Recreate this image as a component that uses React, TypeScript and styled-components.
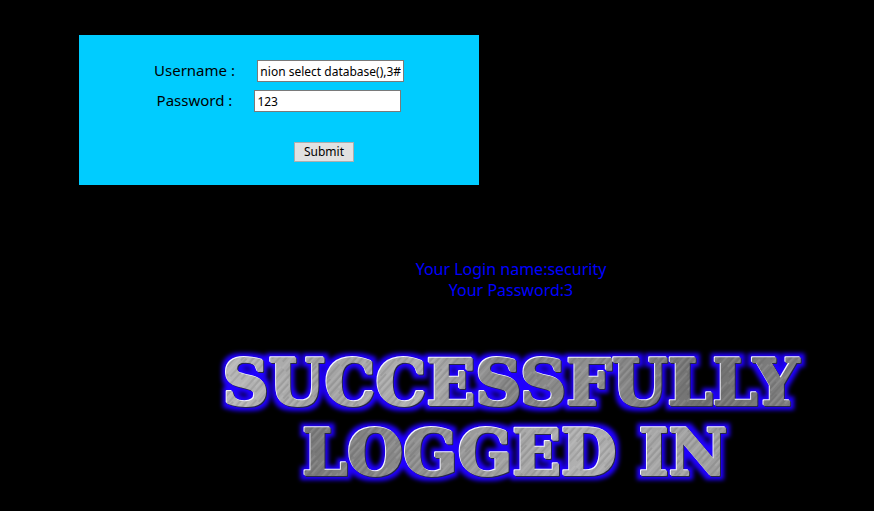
import React, { useLayoutEffect, useRef, useState } from "react";
import styled, { createGlobalStyle } from "styled-components";

const GlobalStyle = createGlobalStyle`
  body {
    margin: 0;
    background: #000;
    color: #000;
    font-family: "Noto Sans", "Open Sans", sans-serif;
    font-size: 16px;
  }
`;

const Page = styled.main`
  display: flex;
  flex-direction: column;
  overflow: hidden;
`;

const LoginPanel = styled.form`
  box-sizing: border-box;
  width: 400px;
  max-width: 100%;
  margin: 35px 0 0 79px;
  padding: 25px 0 23px;
  display: flex;
  flex-direction: column;
  align-items: center;
  gap: 8px;
  background: #00ccff;
`;

const Field = styled.div`
  display: flex;
  align-items: flex-start;
  gap: 22px;
`;

const Label = styled.label`
  font-size: 15px;
  line-height: 20px;
  white-space: pre;
`;

const TextInput = styled.input`
  box-sizing: border-box;
  width: 147px;
  height: 22px;
  padding: 1px 2px;
  border: 1px solid #7a7a7a;
  border-radius: 0;
  background: #fff;
  color: #000;
  font-family: "Noto Sans", "Open Sans", sans-serif;
  font-size: 12px;
  outline: none;
`;

const SubmitButton = styled.button`
  width: 60px;
  height: 20px;
  margin: 22px 0 0 90px;
  padding: 0;
  border: 1px solid #adadad;
  border-radius: 0;
  background: #e1e1e1;
  color: #000;
  font-family: "Noto Sans", "Open Sans", sans-serif;
  font-size: 12px;
  line-height: 18px;
`;

const Result = styled.section`
  margin-top: 74px;
  padding-left: 148px;
  display: flex;
  flex-direction: column;
  align-items: center;
`;

const Message = styled.p`
  margin: 0;
  color: #0000ff;
  font-size: 16px;
  line-height: 21px;
  text-align: center;
`;

const Banner = styled.svg`
  display: block;
  flex: none;
  width: 640px;
  height: 150px;
  margin-top: 40px;
  font-family: "DejaVu Serif", serif;
  font-size: 64px;
  font-weight: 700;
`;

function SuccessBanner() {
  return (
    <Banner viewBox="0 0 640 150" role="img" aria-label="Successfully logged in">
      <defs>
        <linearGradient id="steelTop" x1="0" y1="0" x2="1" y2="0">
          <stop offset="0" stopColor="#c2c2c2" />
          <stop offset="0.2" stopColor="#a2a2a2" />
          <stop offset="0.36" stopColor="#b0b0b0" />
          <stop offset="0.5" stopColor="#828282" />
          <stop offset="0.62" stopColor="#909090" />
          <stop offset="0.8" stopColor="#707070" />
          <stop offset="1" stopColor="#868686" />
        </linearGradient>
        <linearGradient id="steelBottom" x1="0" y1="0" x2="1" y2="0">
          <stop offset="0.15" stopColor="#747474" />
          <stop offset="0.35" stopColor="#8e8e8e" />
          <stop offset="0.6" stopColor="#b0b0b0" />
          <stop offset="0.85" stopColor="#9c9c9c" />
        </linearGradient>
        <pattern
          id="scratches"
          width="19"
          height="41"
          patternUnits="userSpaceOnUse"
          patternTransform="rotate(42)"
        >
          <path d="M1 0V41M6 8V36M12 0V22M15 17V41" stroke="#444" strokeOpacity="0.28" />
          <path d="M3 4V32M8 0V18M10 20V41M17 2V29" stroke="#fff" strokeOpacity="0.18" />
        </pattern>
        <pattern id="steel" width="640" height="150" patternUnits="userSpaceOnUse">
          <rect width="640" height="74" fill="url(#steelTop)" />
          <rect y="74" width="640" height="76" fill="url(#steelBottom)" />
          <rect width="640" height="150" fill="url(#scratches)" />
        </pattern>
        <filter
          id="glow"
          x="0"
          y="0"
          width="640"
          height="150"
          filterUnits="userSpaceOnUse"
          colorInterpolationFilters="sRGB"
        >
          <feMorphology in="SourceAlpha" operator="dilate" radius="4" result="wide" />
          <feGaussianBlur in="wide" stdDeviation="2" result="soft" />
          <feFlood floodColor="#2000ff" />
          <feComposite in2="soft" operator="in" result="halo" />
          <feOffset in="SourceAlpha" dx="-1" dy="-1" result="upper" />
          <feFlood floodColor="#f4f4ff" />
          <feComposite in2="upper" operator="in" result="highlight" />
          <feOffset in="SourceAlpha" dx="1" dy="1" result="lower" />
          <feFlood floodColor="#26264a" />
          <feComposite in2="lower" operator="in" result="shade" />
          <feMerge>
            <feMergeNode in="halo" />
            <feMergeNode in="shade" />
            <feMergeNode in="highlight" />
            <feMergeNode in="SourceGraphic" />
          </feMerge>
        </filter>
      </defs>
      <g
        fill="url(#steel)"
        stroke="url(#steel)"
        strokeWidth="2"
        strokeLinejoin="round"
        filter="url(#glow)"
        textAnchor="middle"
      >
        <text x="320" y="64">SUCCESSFULLY</text>
        <text x="324" y="134">LOGGED IN</text>
      </g>
    </Banner>
  );
}

export default function App() {
  const [username, setUsername] = useState("union select database(),3#");
  const [password, setPassword] = useState("123");
  const usernameRef = useRef<HTMLInputElement>(null);

  // Keep the end of a long username in view.
  useLayoutEffect(() => {
    const input = usernameRef.current;
    if (input) input.scrollLeft = input.scrollWidth;
  }, [username]);

  return (
    <Page>
      <GlobalStyle />
      <LoginPanel onSubmit={(event) => event.preventDefault()}>
        <Field>
          <Label htmlFor="uname">Username :</Label>
          <TextInput
            id="uname"
            ref={usernameRef}
            type="text"
            value={username}
            onChange={(event) => setUsername(event.target.value)}
          />
        </Field>
        <Field>
          <Label htmlFor="passwd">Password :</Label>
          <TextInput
            id="passwd"
            type="text"
            value={password}
            onChange={(event) => setPassword(event.target.value)}
          />
        </Field>
        <SubmitButton type="submit">Submit</SubmitButton>
      </LoginPanel>
      <Result>
        <Message>Your Login name:security</Message>
        <Message>Your Password:3</Message>
        <SuccessBanner />
      </Result>
    </Page>
  );
}
